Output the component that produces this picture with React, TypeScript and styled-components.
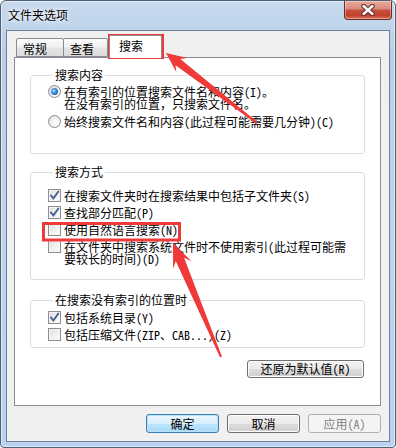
import styled, { createGlobalStyle } from "styled-components";

const FONT = `"Noto Sans Mono CJK SC", "Noto Sans CJK SC", sans-serif`;
const RED = "#f03a3a";

const GlobalStyle = createGlobalStyle`
  html, body {
    margin: 0;
    padding: 0;
    background: #ffffff;
  }
  body {
    font-family: ${FONT};
    font-size: 12px;
    color: #000;
  }
  * {
    box-sizing: border-box;
  }
`;

const Window = styled.div`
  position: relative;
  width: 396px;
  height: 448px;
  display: flex;
  flex-direction: column;
  border: 1px solid #4e6075;
  border-radius: 6px 6px 4px 4px;
  background: linear-gradient(
    180deg,
    #c7daee 0%,
    #b9cfe7 12%,
    #bdd4ec 50%,
    #b8d3f0 100%
  );
  box-shadow: inset 0 0 0 1px rgba(255, 255, 255, 0.55);
  overflow: hidden;
`;

const TitleBar = styled.div`
  height: 29px;
  display: flex;
  align-items: flex-start;
  padding-left: 7px;
`;

const Title = styled.div`
  margin-top: 7px;
  font-size: 12px;
  line-height: 14px;
  color: #000;
  text-shadow: 0 0 6px #fff, 0 0 3px #fff;
`;

const CloseButton = styled.div`
  margin-left: auto;
  margin-right: 3px;
  width: 48px;
  height: 19px;
  display: flex;
  align-items: center;
  justify-content: center;
  border: 1px solid #6e2e27;
  border-top: none;
  border-radius: 0 0 4px 4px;
  background: linear-gradient(
    180deg,
    #e9a99b 0%,
    #d88a7c 45%,
    #c7503f 50%,
    #c43e2c 80%,
    #d9735c 100%
  );
  box-shadow: inset 0 0 0 1px rgba(255, 255, 255, 0.35);
`;

const Client = styled.div`
  margin: 0 5px 5px 5px;
  height: 412px;
  display: flex;
  flex-direction: column;
  padding: 4px 8px 8px 7px;
  background: #f0f0f0;
  border: 1px solid #6f8298;
`;

const TabRow = styled.div`
  height: 22px;
  display: flex;
  align-items: flex-end;
  padding-left: 2px;
`;

const Tab = styled.div<{ $active?: boolean; $w: number }>`
  position: relative;
  width: ${(p) => p.$w}px;
  height: ${(p) => (p.$active ? 23 : 19)}px;
  margin-left: ${(p) => (p.$active ? 1 : -1)}px;
  margin-bottom: ${(p) => (p.$active ? -1 : 0)}px;
  padding: ${(p) => (p.$active ? "3px 0 0 9px" : "3px 0 0 6px")};
  line-height: 14px;
  font-size: 12px;
  border: 1px solid #898c95;
  border-bottom: ${(p) => (p.$active ? "none" : "1px solid #898c95")};
  border-radius: 2px 2px 0 0;
  background: ${(p) =>
    p.$active
      ? "#ffffff"
      : "linear-gradient(180deg, #fbfbfb 0%, #f0f0f0 45%, #e4e4e4 55%, #dcdcdc 100%)"};
  z-index: ${(p) => (p.$active ? 2 : 1)};

  &:first-child {
    margin-left: 0;
  }
`;

const Panel = styled.div`
  height: 349px;
  display: flex;
  flex-direction: column;
  padding: 11px 15px 0 15px;
  background: #ffffff;
  border: 1px solid #898c95;
`;

const Group = styled.fieldset<{ $mt: number; $pt: number; $pb: number }>`
  margin: ${(p) => p.$mt}px 0 0 0;
  padding: ${(p) => p.$pt}px 0 ${(p) => p.$pb}px 17px;
  min-width: 0;
  border: 1px solid #d5dfe5;
  border-radius: 3px;
`;

const Legend = styled.legend`
  margin-left: 5px;
  padding: 0 2px;
  font-size: 12px;
  line-height: 12px;
`;

const OptionList = styled.div<{ $gap: number }>`
  display: flex;
  flex-direction: column;
  gap: ${(p) => p.$gap}px;
`;

const Option = styled.div`
  display: flex;
  align-items: flex-start;
  gap: 3px;
  font-size: 12px;
  line-height: 12px;
  white-space: nowrap;
`;

const Radio = styled.span<{ $checked?: boolean }>`
  flex: none;
  width: 13px;
  height: 13px;
  margin-top: -1px;
  display: flex;
  align-items: center;
  justify-content: center;
  border: 1px solid #8a8c8e;
  border-radius: 50%;
  background: radial-gradient(circle at 60% 65%, #ffffff 0%, #f2f2f2 45%, #cfd1d3 100%);

  &::after {
    content: "";
    display: ${(p) => (p.$checked ? "block" : "none")};
    width: 7px;
    height: 7px;
    border-radius: 50%;
    background: radial-gradient(
      circle at 40% 40%,
      #c5e6ff 0%,
      #3f97e6 35%,
      #1a5fa8 75%,
      #123f73 100%
    );
  }
`;

const Check = styled.span`
  flex: none;
  width: 13px;
  height: 13px;
  margin-top: -1px;
  display: flex;
  align-items: center;
  justify-content: center;
  border: 1px solid #8e8f8f;
  background: linear-gradient(135deg, #dcdcdc 0%, #f0f0f0 50%, #fdfdfd 100%);
  box-shadow: inset 0 0 0 1px #f4f4f4;
`;

const ResetRow = styled.div`
  display: flex;
  justify-content: flex-end;
  margin-top: 12px;
  padding-right: 1px;
`;

const DialogButton = styled.div<{ $variant?: "default" | "disabled"; $w: number; $h: number }>`
  width: ${(p) => p.$w}px;
  height: ${(p) => p.$h}px;
  display: flex;
  align-items: center;
  justify-content: center;
  font-size: 12px;
  line-height: 12px;
  border-radius: 3px;
  border: 1px solid
    ${(p) =>
      p.$variant === "default" ? "#3c7fb1" : p.$variant === "disabled" ? "#adb2b5" : "#707070"};
  color: ${(p) => (p.$variant === "disabled" ? "#838383" : "#000")};
  background: ${(p) =>
    p.$variant === "default"
      ? "linear-gradient(180deg, #eaf6fd 0%, #d9f0fc 50%, #bee6fd 51%, #a7d9f5 100%)"
      : p.$variant === "disabled"
      ? "#f4f4f4"
      : "linear-gradient(180deg, #f2f2f2 0%, #ebebeb 50%, #dddddd 51%, #cfcfcf 100%)"};
  box-shadow: ${(p) =>
    p.$variant === "default"
      ? "inset 0 0 0 1px #b7e3fa"
      : p.$variant === "disabled"
      ? "none"
      : "inset 0 0 0 1px #fcfcfc"};
`;

const ButtonRow = styled.div`
  display: flex;
  justify-content: flex-end;
  gap: 8px;
  margin-top: 8px;
`;

const Overlay = styled.svg`
  position: absolute;
  left: 0;
  top: 0;
  pointer-events: none;
`;

type Pt = [number, number];

function arrowPoints(tip: Pt, tail: Pt, head = 20, half = 9, neck = 4, tailHalf = 1) {
  const dx = tail[0] - tip[0];
  const dy = tail[1] - tip[1];
  const len = Math.hypot(dx, dy);
  const ux = dx / len;
  const uy = dy / len;
  const px = -uy;
  const py = ux;
  const at = (a: number, s: number) =>
    `${(tip[0] + ux * a + px * s).toFixed(1)},${(tip[1] + uy * a + py * s).toFixed(1)}`;
  return [
    at(0, 0),
    at(head, half),
    at(head * 0.75, neck),
    at(len, tailHalf),
    at(len, -tailHalf),
    at(head * 0.75, -neck),
    at(head, -half),
  ].join(" ");
}

function CheckMark() {
  return (
    <svg width="11" height="11" viewBox="0 0 11 11">
      <path
        d="M2 5.6 L4.4 8.4 L9.2 1.8"
        fill="none"
        stroke="#4a6095"
        strokeWidth="1.9"
        strokeLinecap="square"
      />
    </svg>
  );
}

function CloseGlyph() {
  return (
    <svg width="16" height="12" viewBox="0 0 16 12">
      <path
        d="M3.5 2 L12.5 10 M12.5 2 L3.5 10"
        stroke="#5b2a25"
        strokeWidth="4.4"
        strokeLinecap="round"
      />
      <path
        d="M3.5 2 L12.5 10 M12.5 2 L3.5 10"
        stroke="#ffffff"
        strokeWidth="2.4"
        strokeLinecap="round"
      />
    </svg>
  );
}

function CheckOption({ checked, children }: { checked?: boolean; children: React.ReactNode }) {
  return (
    <Option>
      <Check>{checked && <CheckMark />}</Check>
      <span>{children}</span>
    </Option>
  );
}

export default function App() {
  return (
    <>
      <GlobalStyle />
      <Window>
        <TitleBar>
          <Title>文件夹选项</Title>
          <CloseButton>
            <CloseGlyph />
          </CloseButton>
        </TitleBar>
        <Client>
          <TabRow>
            <Tab $w={48}>常规</Tab>
            <Tab $w={45}>查看</Tab>
            <Tab $w={53} $active>
              搜索
            </Tab>
          </TabRow>
          <Panel>
            <Group $mt={0} $pt={5} $pb={25}>
              <Legend>搜索内容</Legend>
              <OptionList $gap={6}>
                <Option>
                  <Radio $checked />
                  <span>
                    在有索引的位置搜索文件名和内容(I)。
                    <br />
                    在没有索引的位置，只搜索文件名。
                  </span>
                </Option>
                <Option>
                  <Radio />
                  <span>始终搜索文件名和内容(此过程可能需要几分钟)(C)</span>
                </Option>
              </OptionList>
            </Group>

            <Group $mt={12} $pt={12} $pb={14}>
              <Legend>搜索方式</Legend>
              <OptionList $gap={5}>
                <CheckOption checked>在搜索文件夹时在搜索结果中包括子文件夹(S)</CheckOption>
                <CheckOption checked>查找部分匹配(P)</CheckOption>
                <CheckOption>使用自然语言搜索(N)</CheckOption>
                <CheckOption>
                  在文件夹中搜索系统文件时不使用索引(此过程可能需
                  <br />
                  要较长的时间)(D)
                </CheckOption>
              </OptionList>
            </Group>

            <Group $mt={14} $pt={6} $pb={6}>
              <Legend>在搜索没有索引的位置时</Legend>
              <OptionList $gap={5}>
                <CheckOption checked>包括系统目录(Y)</CheckOption>
                <CheckOption>包括压缩文件(ZIP、CAB...)(Z)</CheckOption>
              </OptionList>
            </Group>

            <ResetRow>
              <DialogButton $w={117} $h={18}>
                还原为默认值(R)
              </DialogButton>
            </ResetRow>
          </Panel>
          <ButtonRow>
            <DialogButton $variant="default" $w={73} $h={19}>
              确定
            </DialogButton>
            <DialogButton $w={73} $h={19}>
              取消
            </DialogButton>
            <DialogButton $variant="disabled" $w={73} $h={19}>
              应用(A)
            </DialogButton>
          </ButtonRow>
        </Client>

        <Overlay width="396" height="448" viewBox="0 0 396 448">
          <rect x="108.5" y="34.5" width="53" height="22" fill="none" stroke={RED} strokeWidth="3" />
          <rect x="42.5" y="222.5" width="136" height="16.5" fill="none" stroke={RED} strokeWidth="3" />
          <polygon points={arrowPoints([165, 52], [256, 122], 20, 9, 4, 1)} fill={RED} />
          <polygon points={arrowPoints([172, 242], [220, 356], 24, 10, 4.5, 1)} fill={RED} />
        </Overlay>
      </Window>
    </>
  );
}
